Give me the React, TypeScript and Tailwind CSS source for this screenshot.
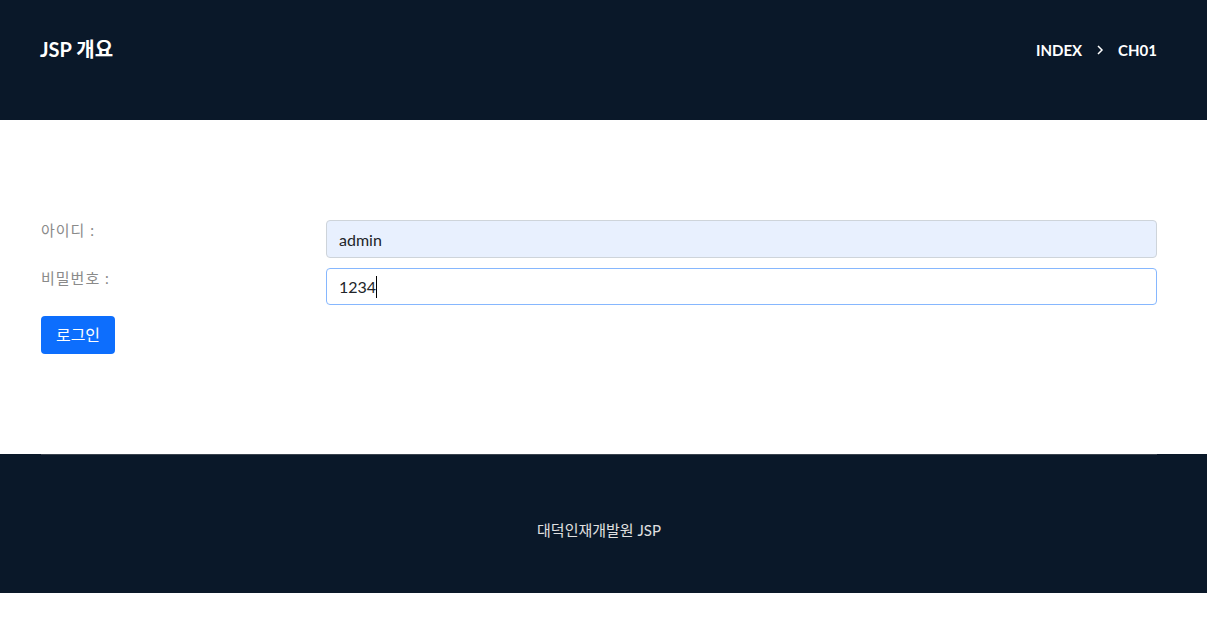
import React from 'react';

const font = { fontFamily: '"Lato", "Noto Sans CJK KR", sans-serif' };

export default function App() {
  return (
    <div className="w-[1207px] bg-white" style={font}>
      {/* Header */}
      <header className="h-[120px] bg-[#0a1829] flex items-center justify-between pl-[40px] pr-[50px] pb-[20px]">
        <h1 className="text-[20px] font-bold text-white -mt-[3px]">JSP 개요</h1>
        <nav className="flex items-center gap-[13px] text-[15px] font-bold text-white">
          <span>INDEX</span>
          <svg width="10" height="12" viewBox="0 0 10 12" fill="none" stroke="white" strokeWidth="1.5">
            <path d="M3 2l4 4-4 4" />
          </svg>
          <span>CH01</span>
        </nav>
      </header>

      {/* Form */}
      <main className="pl-[41px] pr-[50px] pt-[100px] h-[334px]">
        <form className="flex flex-col">
          <div className="flex items-start">
            <label className="w-[285px] -mt-[1px] text-[15px] tracking-[1px] text-[#8a8a8a]">아이디 :</label>
            <input
              readOnly
              value="admin"
              className="flex-1 h-[38px] px-[12px] text-[16px] text-[#212529] bg-[#e8f0fe] border border-[#ced4da] rounded-[4px] outline-none"
            />
          </div>
          <div className="flex items-start mt-[10px]">
            <label className="w-[285px] -mt-[1px] text-[15px] tracking-[1px] text-[#8a8a8a]">비밀번호 :</label>
            <div className="flex-1 h-[37px] px-[12px] flex items-center text-[16px] text-[#212529] bg-white border border-[#86b7fe] rounded-[4px]">
              <span>1234</span>
              <span className="w-px h-[22px] bg-black" />
            </div>
          </div>
          <div className="mt-[11px]">
            <button
              type="button"
              className="w-[74px] h-[38px] bg-[#0d6efd] text-white text-[16px] rounded-[4px]"
            >
              로그인
            </button>
          </div>
        </form>
      </main>

      {/* Footer */}
      <footer className="h-[139px] bg-[#0a1829] pl-[41px] pr-[50px]">
        <div className="h-px bg-[#3a434e]" />
        <div className="h-[138px] flex items-center justify-center">
          <p className="text-[15px] text-[#e0e0e0] pt-[13px]">대덕인재개발원 JSP</p>
        </div>
      </footer>
      <div className="h-[42px] bg-white" />
    </div>
  );
}
